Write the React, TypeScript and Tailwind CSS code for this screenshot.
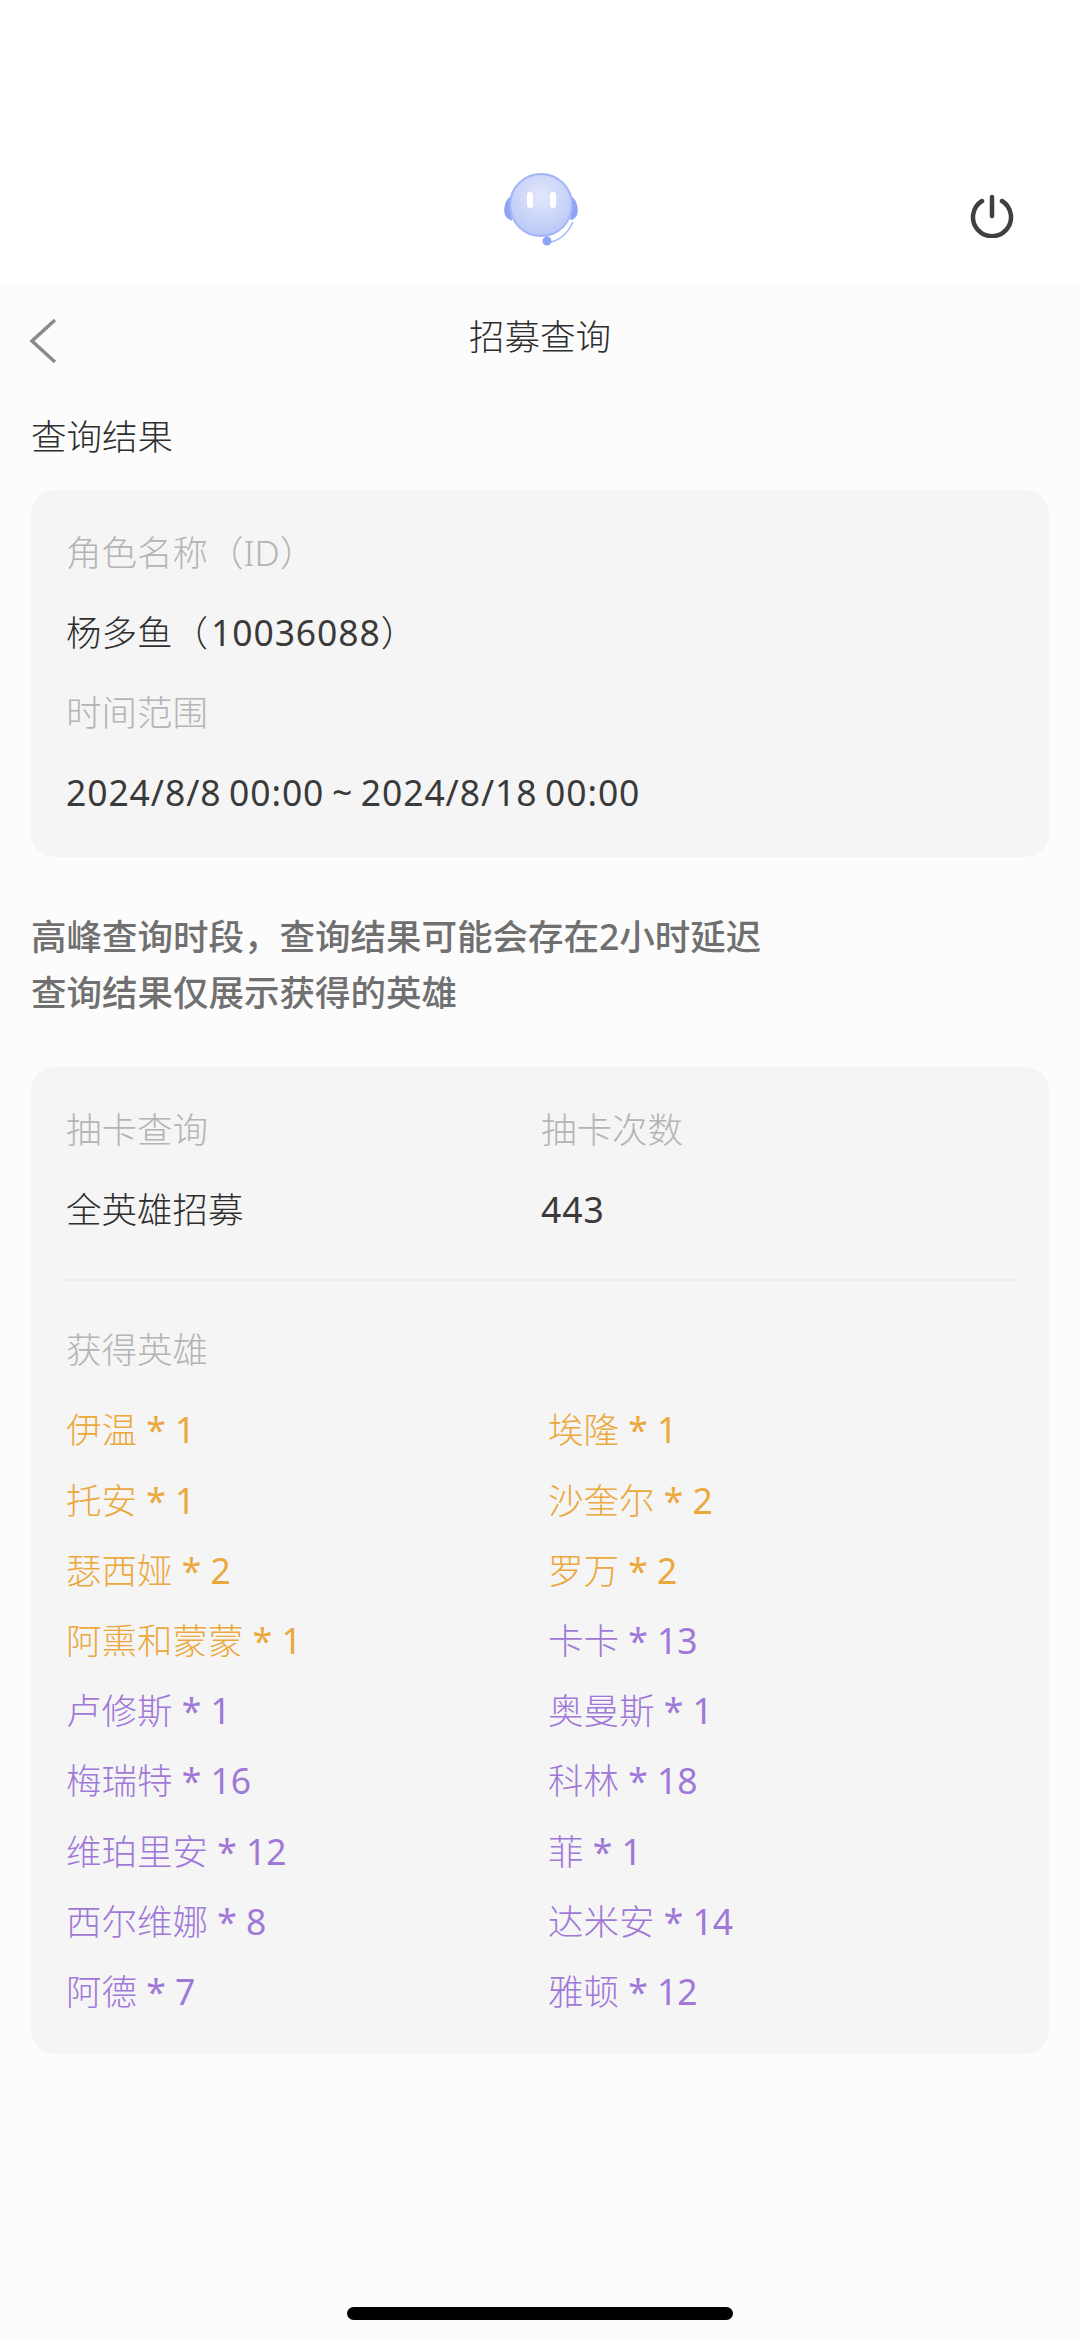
import React from 'react';

const FONT = "font-['Noto_Sans','Noto_Sans_CJK_SC',sans-serif]";

const heroes = [
  { name: '伊温', count: 1, gold: true },
  { name: '埃隆', count: 1, gold: true },
  { name: '托安', count: 1, gold: true },
  { name: '沙奎尔', count: 2, gold: true },
  { name: '瑟西娅', count: 2, gold: true },
  { name: '罗万', count: 2, gold: true },
  { name: '阿熏和蒙蒙', count: 1, gold: true },
  { name: '卡卡', count: 13, gold: false },
  { name: '卢修斯', count: 1, gold: false },
  { name: '奥曼斯', count: 1, gold: false },
  { name: '梅瑞特', count: 16, gold: false },
  { name: '科林', count: 18, gold: false },
  { name: '维珀里安', count: 12, gold: false },
  { name: '菲', count: 1, gold: false },
  { name: '西尔维娜', count: 8, gold: false },
  { name: '达米安', count: 14, gold: false },
  { name: '阿德', count: 7, gold: false },
  { name: '雅顿', count: 12, gold: false },
];

const Logo = () => (
  <svg width="80" height="76" viewBox="0 0 80 76" fill="none" className="blur-[0.7px]">
    <defs>
      <radialGradient id="face" cx="0.5" cy="0.35" r="0.7">
        <stop offset="0" stopColor="#e4e8fb" />
        <stop offset="1" stopColor="#b6c5f7" />
      </radialGradient>
    </defs>
    <path d="M10 27c-5 3-7 13-5 18 1 3 5 5 7 6z" fill="#8ea4f4" />
    <path d="M72 27c5 3 7 13 5 18-1 3-5 5-7 6z" fill="#8ea4f4" />
    <circle cx="41" cy="35" r="31" fill="url(#face)" stroke="#a4b5f6" strokeWidth="2" />
    <rect x="27" y="22" width="6" height="16" rx="3" fill="#ffffff" />
    <rect x="50" y="22" width="6" height="16" rx="3" fill="#ffffff" />
    <path d="M71 50c-5 10-13 18-24 20" stroke="#ffffff" strokeWidth="2.5" />
    <path d="M73 52c-5 11-14 19-26 21" stroke="#a4b5f6" strokeWidth="1.5" />
    <circle cx="47" cy="71" r="4.5" fill="#8ea4f4" />
  </svg>
);

const Power = () => (
  <svg width="44" height="44" viewBox="0 0 44 44" fill="none" stroke="#404040" strokeWidth="4.5" strokeLinecap="round">
    <path d="M22 3v19" />
    <path d="M12 7a19 19 0 1 0 20 0" />
  </svg>
);

const Back = () => (
  <svg width="30" height="46" viewBox="0 0 30 46" fill="none" stroke="#8a8a8a" strokeWidth="3.5">
    <path d="M27 2 4 23l23 21" />
  </svg>
);

const Label = ({ children }: { children: React.ReactNode }) => (
  <div className="h-[80px] flex items-center text-[35.5px] font-light text-[#b4b4b4]">{children}</div>
);

const Value = ({ children }: { children: React.ReactNode }) => (
  <div className="h-[80px] flex items-center text-[35.5px] font-light text-[#2e2e2e]">{children}</div>
);

const Num = ({ children }: { children: React.ReactNode }) => (
  <span className="font-normal text-[#3a3a3a] tracking-[0.9px] [word-spacing:-2.5px]">{children}</span>
);

export default function App() {
  return (
    <div className={`relative w-[1080px] h-[2341px] overflow-hidden bg-[#fcfcfc] ${FONT}`}>
      {/* Top bar */}
      <header className="relative h-[284px] bg-white flex items-end justify-center pb-[38px]">
        <Logo />
        <div className="absolute right-[66px] bottom-[46px]">
          <Power />
        </div>
      </header>

      {/* Nav */}
      <div className="relative h-[110px] flex items-center justify-center">
        <div className="absolute left-[28px] top-[34px]">
          <Back />
        </div>
        <div className="text-[35.5px] font-light text-[#2e2e2e] -translate-y-[2px]">招募查询</div>
      </div>

      <main className="px-[31px]">
        <div className="h-[86px] flex items-center text-[35.5px] font-light text-[#2e2e2e]">查询结果</div>

        {/* Query card */}
        <section className="mt-[10px] h-[367px] rounded-[24px] bg-[#f5f5f5] px-[35px] pt-[23px]">
          <Label>角色名称（ID）</Label>
          <Value>
            <span>杨多鱼（<span className="ml-[3px]"><Num>10036088</Num></span>）</span>
          </Value>
          <Label>时间范围</Label>
          <Value>
            <Num>2024/8/8 00:00 ~ 2024/8/18 00:00</Num>
          </Value>
        </section>

        <div className="mt-[51px] text-[35.5px] leading-[56px] font-medium text-[#707070]">
          <p>高峰查询时段，查询结果可能会存在2小时延迟</p>
          <p>查询结果仅展示获得的英雄</p>
        </div>

        {/* Result card */}
        <section className="mt-[47px] h-[987px] rounded-[24px] bg-[#f5f5f5] px-[35px] pt-[23px]">
          <div className="grid grid-cols-[475px_1fr]">
            <Label>抽卡查询</Label>
            <Label>抽卡次数</Label>
            <Value>全英雄招募</Value>
            <Value>
              <Num>443</Num>
            </Value>
          </div>
          <div className="mt-[29px] h-[2px] bg-[#ececec]" />
          <div className="mt-[29px] mb-[5px]">
            <Label>获得英雄</Label>
          </div>
          <div className="grid grid-cols-[482px_1fr]">
            {heroes.map((h) => (
              <div
                key={h.name}
                className={`h-[70.2px] flex items-center whitespace-pre text-[35.5px] font-light ${h.gold ? 'text-[#eba83c]' : 'text-[#a078d8]'}`}
              >
                <span>{h.name}</span>
                <span className="font-normal">{` * ${h.count}`}</span>
              </div>
            ))}
          </div>
        </section>
      </main>

      {/* Home indicator */}
      <div className="absolute left-[347px] bottom-[21px] w-[386px] h-[13px] rounded-full bg-black" />
    </div>
  );
}
